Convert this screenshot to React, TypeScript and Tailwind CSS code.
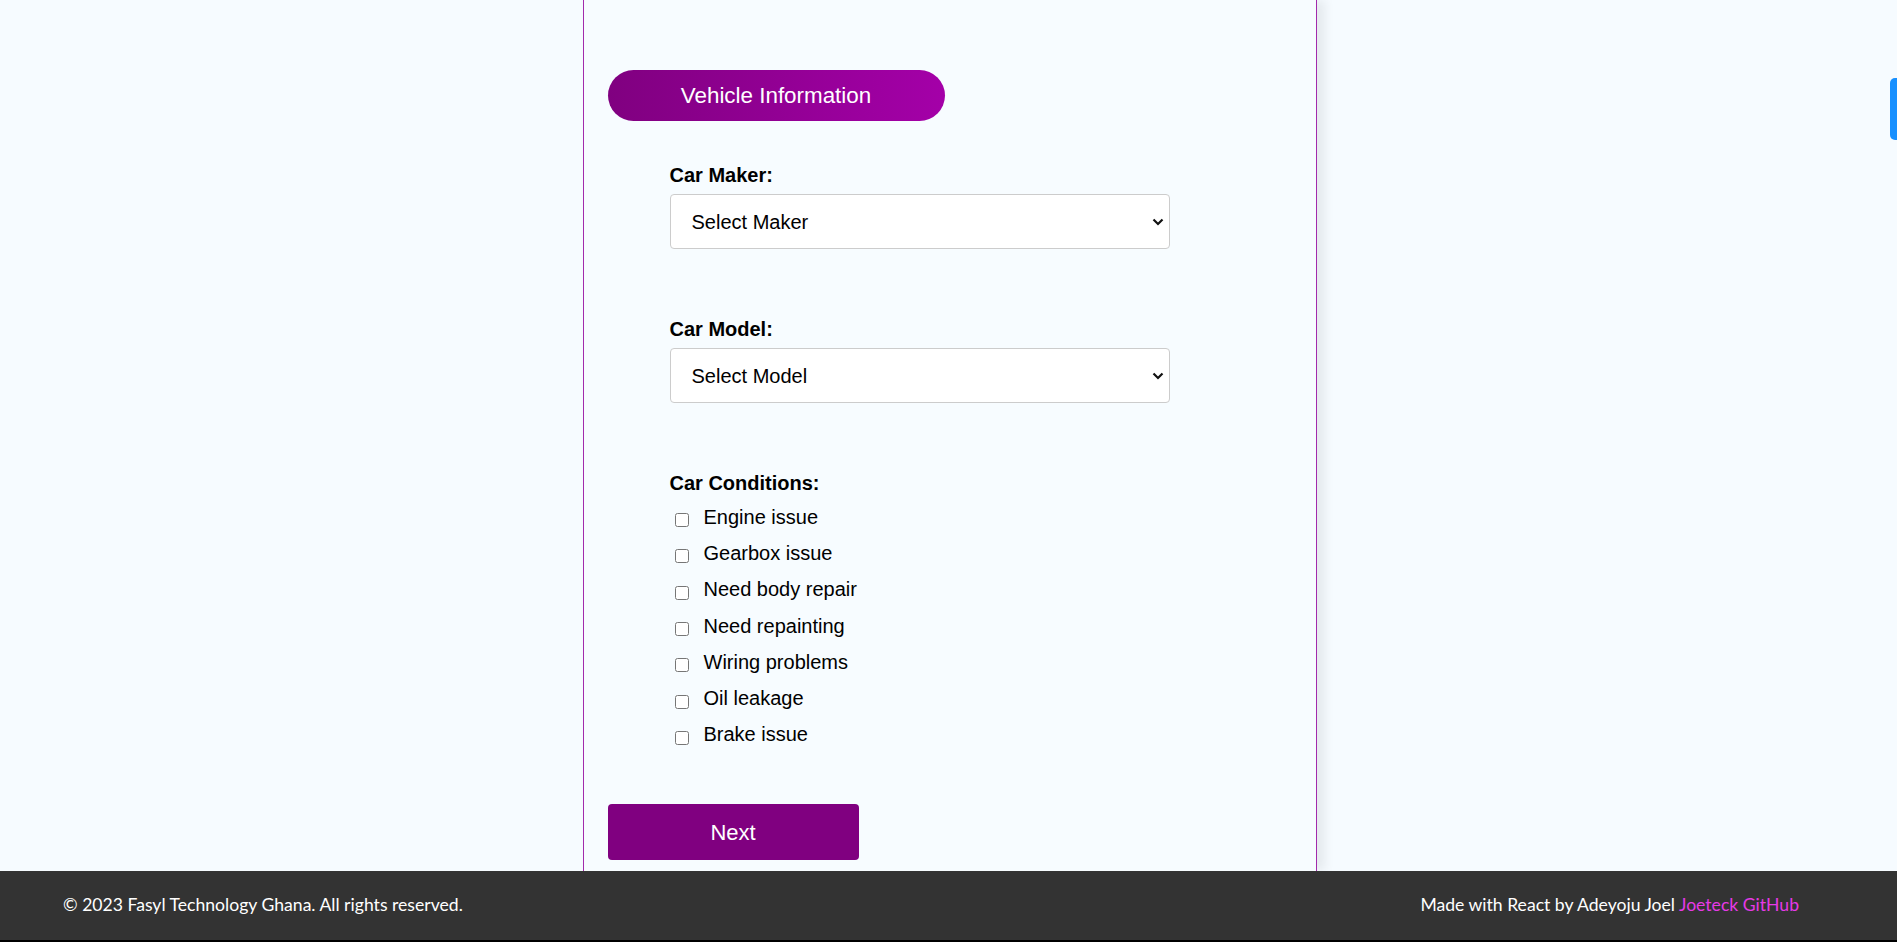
import { useState } from 'react';

const conditions = [
    'Engine issue',
    'Gearbox issue',
    'Need body repair',
    'Need repainting',
    'Wiring problems',
    'Oil leakage',
    'Brake issue',
];

function Chevron() {
    return (
        <svg
            width="12"
            height="8"
            viewBox="0 0 12 8"
            className="pointer-events-none absolute right-[6px] top-1/2 -translate-y-1/2"
        >
            <path d="M1.5 1.5 L6 6 L10.5 1.5" fill="none" stroke="#111" strokeWidth="2.2" />
        </svg>
    );
}

function SelectField({ label, placeholder }: { label: string; placeholder: string }) {
    const [value, setValue] = useState('');
    return (
        <div className="flex flex-col">
            <label className="text-[20px] leading-[23px] font-bold text-black">{label}</label>
            <div className="relative mt-[7px] w-[500px]">
                <select
                    value={value}
                    onChange={(e) => setValue(e.target.value)}
                    className="w-full h-[55px] appearance-none bg-white border border-[#cccccc] rounded-[4px] pl-[21px] pr-8 text-[20px] text-black outline-none"
                >
                    <option value="">{placeholder}</option>
                </select>
                <Chevron />
            </div>
        </div>
    );
}

export default function App() {
    const [checked, setChecked] = useState<string[]>([]);

    const toggle = (c: string) =>
        setChecked((prev) => (prev.includes(c) ? prev.filter((x) => x !== c) : [...prev, c]));

    return (
        <div
            className="min-h-screen flex flex-col bg-[#f6fbff]"
            style={{ fontFamily: '"Liberation Sans", Arial, sans-serif' }}
        >
            <main className="flex-1 flex justify-center pl-[2px]">
                <div className="w-[734px] border-x border-[#a22aac] bg-[#f7fcff] shadow-[8px_0_10px_rgba(0,0,0,0.07)] pt-[70px] pl-[24px] pb-[10px]">
                    {/* Section heading */}
                    <div className="w-[337px] h-[51px] rounded-full bg-gradient-to-r from-[#800080] to-[#a400a8] flex items-center justify-center text-white text-[22.4px]">
                        Vehicle Information
                    </div>

                    {/* Form */}
                    <div className="ml-[62px] mt-[43px]">
                        <SelectField label="Car Maker:" placeholder="Select Maker" />
                        <div className="mt-[69px]">
                            <SelectField label="Car Model:" placeholder="Select Model" />
                        </div>

                        <div className="mt-[69px]">
                            <div className="text-[20px] leading-[23px] font-bold text-black">Car Conditions:</div>
                            <div className="mt-[4px] flex flex-col">
                                {conditions.map((c) => (
                                    <label key={c} className="flex items-center h-[36.3px] cursor-pointer">
                                        <input
                                            type="checkbox"
                                            checked={checked.includes(c)}
                                            onChange={() => toggle(c)}
                                            className="m-0 ml-[5px] mr-[15px] w-[14px] h-[14px] translate-y-[3px]"
                                        />
                                        <span className="text-[20px] leading-[23px] text-black">{c}</span>
                                    </label>
                                ))}
                            </div>
                        </div>
                    </div>

                    <button className="mt-[51px] w-[251px] h-[56px] rounded-[4px] bg-[#800080] text-white text-[22px]">
                        Next
                    </button>
                </div>
            </main>

            <footer
                className="h-[71px] bg-[#333333] border-b-2 border-black flex items-center justify-between pl-[63px] pr-[98px] text-white text-[17.6px]"
                style={{ fontFamily: 'Lato, "Open Sans", sans-serif' }}
            >
                <p>© 2023 Fasyl Technology Ghana. All rights reserved.</p>
                <p>
                    Made with React by Adeyoju Joel{' '}
                    <a href="#" className="text-[#e63ae6]">Joeteck GitHub</a>
                </p>
            </footer>

            {/* floating tab at the right edge */}
            <div className="fixed right-0 top-[78px] w-[7px] h-[62px] rounded-l-[5px] bg-[#1890ff]" />
        </div>
    );
}
